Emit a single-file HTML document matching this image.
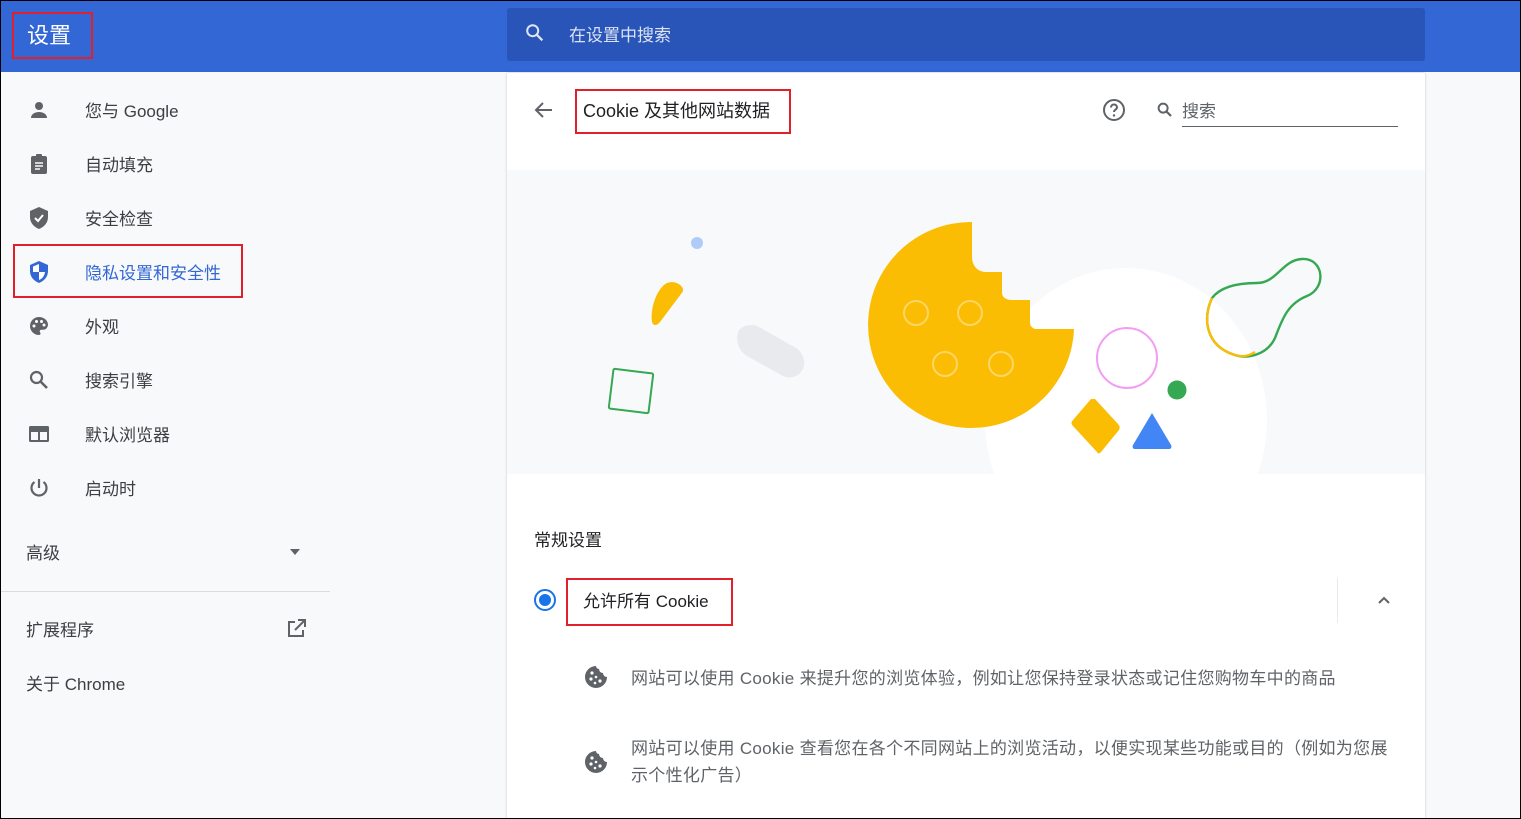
<!DOCTYPE html>
<html><head><meta charset="utf-8"><style>
*{margin:0;padding:0;box-sizing:border-box}
body{width:1521px;height:819px;overflow:hidden;background:#f8f9fa;font-family:"Liberation Sans","Noto Sans CJK SC",sans-serif;position:relative}
.frame{position:absolute;left:0;top:0;width:1521px;height:819px;border:1px solid #000;z-index:9;pointer-events:none}
.hdr{position:absolute;left:0;top:0;width:1521px;height:72px;background:#3367d6}
.abs{position:absolute}
.item{position:absolute;left:85px;font-size:17px;color:#3c4043}
.ic{position:absolute;left:27px}
.red{position:absolute;border:2px solid #e0202a}
.card{position:absolute;left:507px;top:73px;width:918px;height:746px;background:#fff;box-shadow:0 0 2px rgba(60,64,67,.3)}
.txt{color:#5f6368;font-size:17px}
</style></head><body>
<div class="frame"></div>
<div class="hdr"></div>
<div class="red" style="left:12px;top:12px;width:81px;height:47px"></div>
<div class="abs" style="left:27px;top:18px;font-size:22px;color:#fff">设置</div>
<div class="abs" style="left:507px;top:8px;width:918px;height:53px;background:#2a55b8;border-radius:3px"></div>
<svg class="abs" style="left:524px;top:22px" width="22" height="22" viewBox="0 0 24 24"><circle cx="9.5" cy="9.5" r="6" fill="none" stroke="#dfe6f6" stroke-width="2.2"/><path d="M14 14l6 6" stroke="#dfe6f6" stroke-width="2.4"/></svg>
<div class="abs" style="left:569px;top:21px;font-size:17px;color:#dbe3f5">在设置中搜索</div>

<svg class="ic" style="top:98px" width="24" height="24" viewBox="0 0 24 24"><circle cx="12" cy="8" r="4" fill="#5f6368"/><path d="M4 20c0-4 4-6 8-6s8 2 8 6z" fill="#5f6368"/></svg>
<div class="item" style="top:97px">您与 Google</div>
<svg class="ic" style="top:152px" width="24" height="24" viewBox="0 0 24 24"><rect x="4" y="4" width="16" height="18" rx="2" fill="#5f6368"/><rect x="9" y="2" width="6" height="4" rx="1" fill="#5f6368"/><path d="M8 11h8M8 14h8M8 17h5" stroke="#f8f9fa" stroke-width="1.6"/></svg>
<div class="item" style="top:151px">自动填充</div>
<svg class="ic" style="top:206px" width="24" height="24" viewBox="0 0 24 24"><path d="M12 1l9 4v6c0 6-4 10-9 12C7 21 3 17 3 11V5z" fill="#5f6368"/><path d="M8 12l3 3 5-6" stroke="#fff" stroke-width="2" fill="none"/></svg>
<div class="item" style="top:205px">安全检查</div>
<div class="red" style="left:13px;top:244px;width:230px;height:54px"></div>
<svg class="ic" style="top:260px" width="24" height="24" viewBox="0 0 24 24"><path d="M12 1l9 4v6c0 6-4 10-9 12C7 21 3 17 3 11V5z" fill="#3367d6"/><path d="M12 4v8H6V6.5zM12 12h6c-.5 4-3 7-6 8z" fill="#fff"/></svg>
<div class="item" style="top:259px;color:#3367d6">隐私设置和安全性</div>
<svg class="ic" style="top:314px" width="24" height="24" viewBox="0 0 24 24"><path d="M12 3a9 9 0 000 18c1 0 1.5-.7 1.5-1.5 0-1-.8-1.300-.8-2.2 0-.9.7-1.5 1.6-1.5H16a5 5 0 005-5c0-4.3-4-7.8-9-7.8z" fill="#5f6368"/><circle cx="7" cy="12" r="1.5" fill="#fff"/><circle cx="9.5" cy="7.5" r="1.5" fill="#fff"/><circle cx="14.5" cy="7.5" r="1.5" fill="#fff"/><circle cx="17" cy="11" r="1.5" fill="#fff"/></svg>
<div class="item" style="top:313px">外观</div>
<svg class="ic" style="top:368px" width="24" height="24" viewBox="0 0 24 24"><circle cx="9.5" cy="9.5" r="5.5" fill="none" stroke="#5f6368" stroke-width="2.2"/><path d="M14 14l6 6" stroke="#5f6368" stroke-width="2.6"/></svg>
<div class="item" style="top:367px">搜索引擎</div>
<svg class="ic" style="top:422px" width="24" height="24" viewBox="0 0 24 24"><rect x="2" y="4" width="20" height="16" rx="1.5" fill="#5f6368"/><rect x="4" y="10" width="7" height="8" fill="#f8f9fa"/><rect x="13" y="10" width="7" height="8" fill="#f8f9fa"/></svg>
<div class="item" style="top:421px">默认浏览器</div>
<svg class="ic" style="top:476px" width="24" height="24" viewBox="0 0 24 24"><path d="M12 3v9" stroke="#5f6368" stroke-width="2.2"/><path d="M7.5 6a7.5 7.5 0 109 0" fill="none" stroke="#5f6368" stroke-width="2.2"/></svg>
<div class="item" style="top:475px">启动时</div>
<div class="item" style="left:26px;top:539px">高级</div>
<div class="abs" style="left:290px;top:549px;border:5px solid transparent;border-top:6px solid #5f6368"></div>
<div class="abs" style="left:0;top:591px;width:330px;height:1px;background:#dadce0"></div>
<div class="item" style="left:26px;top:616px">扩展程序</div>
<svg class="abs" style="left:284px;top:617px" width="24" height="24" viewBox="0 0 24 24"><path d="M19 13v6H5V5h6" fill="none" stroke="#5f6368" stroke-width="2"/><path d="M14 3h7v7M21 3l-10 10" fill="none" stroke="#5f6368" stroke-width="2"/></svg>
<div class="item" style="left:26px;top:670px">关于 Chrome</div>

<div class="card"></div>
<svg class="abs" style="left:532px;top:98px" width="24" height="24" viewBox="0 0 24 24"><path d="M20 12H5M11 5l-7 7 7 7" fill="none" stroke="#5f6368" stroke-width="2"/></svg>
<div class="red" style="left:575px;top:89px;width:216px;height:45px"></div>
<div class="abs" style="left:583px;top:97px;font-size:18px;color:#202124">Cookie 及其他网站数据</div>
<svg class="abs" style="left:1102px;top:98px" width="24" height="24" viewBox="0 0 24 24"><circle cx="12" cy="12" r="10" fill="none" stroke="#5f6368" stroke-width="2"/><path d="M9 9.5a3 3 0 016 0c0 2-3 2.2-3 4.5" fill="none" stroke="#5f6368" stroke-width="2"/><circle cx="12" cy="17.5" r="1.2" fill="#5f6368"/></svg>
<svg class="abs" style="left:1156px;top:101px" width="18" height="18" viewBox="0 0 24 24"><circle cx="9.5" cy="9.5" r="6" fill="none" stroke="#5f6368" stroke-width="2.6"/><path d="M14 14l6 6" stroke="#5f6368" stroke-width="3"/></svg>
<div class="abs" style="left:1182px;top:97px;font-size:17px;color:#5f6368">搜索</div>
<div class="abs" style="left:1182px;top:126px;width:216px;height:1px;background:#5f6368"></div>

<svg class="abs" style="left:507px;top:170px" width="918" height="304" viewBox="0 0 918 304">
<rect width="918" height="304" fill="#f8f9fa"/>
<ellipse cx="619" cy="250" rx="141" ry="152" fill="#fff"/>
<circle cx="190" cy="73" r="6" fill="#aecbfa"/>
<path d="M160 113c8-3 15 2 16 6c0 2 0 3-2 5l-21 28c-3 4-7 4-8 0c-2-14 5-34 15-39z" fill="#fbbc04"/>
<path d="M232 160c6-6 14-6 20-3l37 21c8 5 11 17 5 24c-4 5-11 7-18 4l-36-20c-10-6-12-19-8-26z" fill="#e8eaed"/>
<rect x="104" y="201" width="40" height="40" rx="1.5" transform="rotate(7 124 221)" fill="none" stroke="#34a853" stroke-width="2"/>
<path d="M465 52v35c0 8 5 15 14 15h16v21c0 4 4 7 10 7h18v23c0 3 3 6 6 6h38A103 103 0 1 1 465 52z" fill="#fbbc04"/>
<g fill="none" stroke="#fdd663" stroke-width="2"><circle cx="409" cy="143" r="12"/><circle cx="463" cy="143" r="12"/><circle cx="438" cy="194" r="12"/><circle cx="494" cy="194" r="12"/></g>
<circle cx="620" cy="188" r="30" fill="#fff" stroke="#f49cf5" stroke-width="2"/>
<circle cx="670" cy="220" r="9.5" fill="#34a853"/>
<path d="M588 229l23 25c2 2 2 4 1 6l-18 22c-2 2-3 2-4 0l-24-26c-2-2-2-4 0-6l18-21z" fill="#fbbc04"/>
<path d="M645 243l19 32c1 2 0 4-2 4h-34c-2 0-3-2-2-4z" fill="#4285f4"/>
<path d="M705 128C715 115 735 113 750 113C770 113 775 90 795 89C817 88 820 118 800 126C780 134 775 150 768 168C760 185 740 190 725 184C700 175 695 150 705 128Z" fill="none" stroke="#34a853" stroke-width="2.4"/>
<path d="M705 128C695 150 700 175 725 184C735 188 742 186 748 182" fill="none" stroke="#fbbc04" stroke-width="2.4"/>
</svg>

<div class="abs" style="left:534px;top:526px;font-size:17px;color:#202124">常规设置</div>
<div class="abs" style="left:534px;top:589px;width:22px;height:22px;border:2px solid #1a73e8;border-radius:50%"></div>
<div class="abs" style="left:539px;top:594px;width:12px;height:12px;background:#1a73e8;border-radius:50%"></div>
<div class="red" style="left:566px;top:578px;width:167px;height:48px"></div>
<div class="abs" style="left:583px;top:587px;font-size:17px;color:#202124">允许所有 Cookie</div>
<div class="abs" style="left:1337px;top:578px;width:1px;height:45px;background:#e8eaed"></div>
<svg class="abs" style="left:1376px;top:592px" width="16" height="16" viewBox="0 0 16 16"><path d="M3 11l5-5 5 5" fill="none" stroke="#5f6368" stroke-width="2"/></svg>

<svg class="abs" style="left:584px;top:665px" width="24" height="24" viewBox="0 0 24 24"><path d="M12 1a11 11 0 1011 11 4 4 0 01-4-4 4 4 0 01-4-4 3 3 0 01-3-3z" fill="#5f6368"/><g fill="#fff"><circle cx="8" cy="8" r="1.6"/><circle cx="7" cy="14" r="1.6"/><circle cx="12" cy="12" r="1.3"/><circle cx="16" cy="16" r="1.6"/><circle cx="11" cy="18" r="1.3"/></g></svg>
<div class="abs txt" style="left:631px;top:664px;letter-spacing:0.3px">网站可以使用 Cookie 来提升您的浏览体验，例如让您保持登录状态或记住您购物车中的商品</div>
<svg class="abs" style="left:584px;top:750px" width="24" height="24" viewBox="0 0 24 24"><path d="M12 1a11 11 0 1011 11 4 4 0 01-4-4 4 4 0 01-4-4 3 3 0 01-3-3z" fill="#5f6368"/><g fill="#fff"><circle cx="8" cy="8" r="1.6"/><circle cx="7" cy="14" r="1.6"/><circle cx="12" cy="12" r="1.3"/><circle cx="16" cy="16" r="1.6"/><circle cx="11" cy="18" r="1.3"/></g></svg>
<div class="abs txt" style="left:631px;top:735px;width:768px;line-height:27px;letter-spacing:0.3px">网站可以使用 Cookie 查看您在各个不同网站上的浏览活动，以便实现某些功能或目的（例如为您展示个性化广告）</div>
</body></html>
